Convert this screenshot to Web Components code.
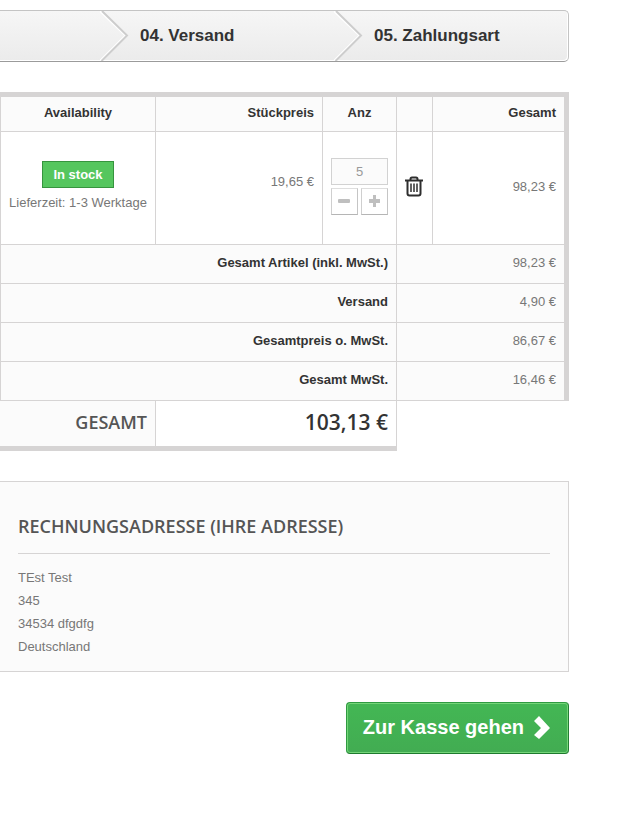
<!DOCTYPE html>
<html lang="de">
<head>
<meta charset="utf-8">
<meta name="viewport" content="width=device-width, initial-scale=1">
<title>Warenkorb</title>
<style>
  body { margin: 0; background: #fff; color: #777; font: 13px/18px "Liberation Sans", Arial, sans-serif; }
</style>
</head>
<body>
<checkout-page>
  <step-bar slot="steps">
    <step-item></step-item>
    <step-item arrow>04. Versand</step-item>
    <step-item arrow>05. Zahlungsart</step-item>
  </step-bar>
  <cart-summary></cart-summary>
  <address-card>
    <span slot="title">Rechnungsadresse (Ihre Adresse)</span>
    <address-line>TEst Test</address-line>
    <address-line>345</address-line>
    <address-line>34534 dfgdfg</address-line>
    <address-line>Deutschland</address-line>
  </address-card>
  <checkout-button>Zur Kasse gehen</checkout-button>
</checkout-page>

<script>
const define = (name, html, setup) => {
  const template = document.createElement('template');
  template.innerHTML = html;
  customElements.define(name, class extends HTMLElement {
    constructor() {
      super();
      this.attachShadow({ mode: 'open' }).append(template.content.cloneNode(true));
      if (setup) setup(this.shadowRoot);
    }
  });
};

define('checkout-page', `
  <style>
    :host { display: block; padding: 10px 73px 60px 0; }
    main { display: flex; flex-direction: column; gap: 30px; }
  </style>
  <main><slot name="steps"></slot><slot></slot></main>
`);

define('step-bar', `
  <style>
    :host {
      display: grid; grid-template-columns: 100px 234px 1fr; height: 50px;
      border: 1px solid #c4c4c4; border-left: 0; border-bottom-color: #9b9b9b;
      border-radius: 0 5px 5px 0; background: linear-gradient(#f6f6f6, #ebebeb);
      box-shadow: inset -1px -1px #fff;
    }
  </style>
  <slot></slot>
`);

define('step-item', `
  <style>
    :host { display: flex; align-items: center; gap: 11px; color: #333; font-size: 17px; font-weight: bold; line-height: 24px; }
    svg { display: none; flex: none; }
    :host([arrow]) svg { display: block; }
  </style>
  <svg width="29" height="50" viewBox="0 0 29 50" fill="none" aria-hidden="true">
    <path d="M0 0 25.5 24.5 0 50" stroke="#fff" stroke-width="2"/>
    <path d="M2 0 27 24.5 1.5 50" stroke="#cdcdcd" stroke-width="2"/>
  </svg>
  <span><slot></slot></span>
`);

define('stock-badge', `
  <style>
    :host { display: inline-block; padding: 4px 10px; border: 1px solid #36943e; background: #55c65e; color: #fff; font-weight: bold; line-height: 17px; }
  </style>
  <slot></slot>
`);

define('quantity-stepper', `
  <style>
    :host { display: grid; grid-template-columns: 27px 27px; gap: 3px; justify-content: center; }
    input, button { box-sizing: border-box; height: 27px; margin: 0; padding: 0; border-radius: 0; }
    input { grid-column: span 2; width: 57px; border: 1px solid #d2d2d2; background: #fbfbfb; color: #999; text-align: center; font: inherit; }
    button { display: grid; place-items: center; border: 1px solid; border-color: #dedede #c5c5c5 #b5b5b5 #cfcfcf; background: #fff; color: #bfbfbf; }
  </style>
  <input type="text" value="5" aria-label="Anzahl">
  <button type="button" aria-label="Weniger"><svg width="13" height="15" viewBox="0 0 13 15"><rect x="0" y="5" width="12" height="4" rx="1" fill="currentColor"/></svg></button>
  <button type="button" aria-label="Mehr"><svg width="13" height="15" viewBox="0 0 13 15"><path d="M5 1h3v4h4v4H8v4H5V9H1V5h4z" fill="currentColor"/></svg></button>
`, root => {
  const input = root.querySelector('input');
  const [less, more] = root.querySelectorAll('button');
  less.addEventListener('click', () => { input.value = Math.max(1, Number(input.value) - 1); });
  more.addEventListener('click', () => { input.value = Number(input.value) + 1; });
});

define('delete-button', `
  <style>
    :host { display: block; }
    button { display: block; margin: 0 auto; padding: 0; border: 0; background: none; color: #2e2e2e; }
    svg { display: block; }
  </style>
  <button type="button" aria-label="Artikel entfernen">
    <svg width="18" height="21" viewBox="0 0 18 21" fill="none" stroke="currentColor" aria-hidden="true">
      <path d="M0 4.5h18" stroke-width="2"/>
      <path d="M5.5 4V3q0-1.5 1.5-1.5h4q1.500 0 1.500 1.500v1" stroke-width="2"/>
      <path d="M2.500 5v12.500q0 2 2 2h9q2 0 2-2V5" stroke-width="2"/>
      <path d="M6 7.500V16M9 7.500V16M12 7.500V16" stroke-width="1.500"/>
    </svg>
  </button>
`);

define('cart-summary', `
  <style>
    :host { display: block; }
    table { width: 100%; table-layout: fixed; border-collapse: separate; border-spacing: 0; border-top: 5px solid #d6d4d4; }
    .c1 { width: 156px; } .c2 { width: 167px; } .c3 { width: 74px; } .c4 { width: 36px; }
    th, td { box-sizing: border-box; padding: 8px; border: 0 solid #d6d4d4; border-width: 0 1px 1px 0; text-align: right; vertical-align: middle; }
    th { color: #333; background: #fbfbfb; }
    thead th { height: 35px; padding: 7px 8px 9px; }
    tr > :first-child { border-left-width: 1px; }
    tr > :last-child { border-right-width: 5px; }
    tbody td { height: 113px; padding: 8px 8px 11px; }
    .center { text-align: center; }
    .availability { display: flex; flex-direction: column; align-items: center; gap: 6px; white-space: nowrap; }
    tbody .price { padding-bottom: 20px; }
    tbody .tight { padding: 8px 4px 12px; }
    tbody .delete { padding: 8px 5px 11px 4px; }
    tfoot th, tfoot td { height: 39px; padding: 8px 8px 11px; background: #fbfbfb; }
    tfoot .total > * { height: 50px; padding: 8px 8px 12px; border-bottom-width: 5px; font-family: "Open Sans", sans-serif; }
    tfoot .total th { border-left: 0; color: #555; font-size: 18px; font-weight: 600; line-height: 24px; }
    tfoot .total td { color: #333; background: #fff; font-size: 21px; font-weight: 600; line-height: 24px; }
    tfoot .total .blank { border: 0; }
  </style>
  <table>
    <colgroup><col class="c1"><col class="c2"><col class="c3"><col class="c4"><col></colgroup>
    <thead><tr>
      <th class="center" scope="col">Availability</th><th scope="col">Stückpreis</th>
      <th class="center" scope="col">Anz</th><th></th><th scope="col">Gesamt</th>
    </tr></thead>
    <tbody><tr>
      <td><div class="availability"><stock-badge>In stock</stock-badge><span>Lieferzeit: 1-3 Werktage</span></div></td>
      <td class="price">19,65 €</td>
      <td class="tight"><quantity-stepper></quantity-stepper></td>
      <td class="delete"><delete-button></delete-button></td>
      <td>98,23 €</td>
    </tr></tbody>
    <tfoot>
      <tr><th colspan="3" scope="row">Gesamt Artikel (inkl. MwSt.)</th><td colspan="2">98,23 €</td></tr>
      <tr><th colspan="3" scope="row">Versand</th><td colspan="2">4,90 €</td></tr>
      <tr><th colspan="3" scope="row">Gesamtpreis o. MwSt.</th><td colspan="2">86,67 €</td></tr>
      <tr><th colspan="3" scope="row">Gesamt MwSt.</th><td colspan="2">16,46 €</td></tr>
      <tr class="total"><th scope="row">GESAMT</th><td colspan="2">103,13 €</td><td class="blank" colspan="2"></td></tr>
    </tfoot>
  </table>
`);

define('address-line', `
  <style>:host { display: block; line-height: 23px; }</style>
  <slot></slot>
`);

define('address-card', `
  <style>
    :host { display: block; padding: 32px 18px 13px; border: 1px solid #d6d4d4; border-left: 0; background: #fbfbfb; }
    h3 { margin: 0 0 12px; padding-bottom: 15px; border-bottom: 1px solid #d6d4d4; color: #555; font: 600 18px/24px "Open Sans", sans-serif; text-transform: uppercase; }
  </style>
  <h3><slot name="title"></slot></h3>
  <slot></slot>
`);

define('checkout-button', `
  <style>
    :host { display: flex; justify-content: flex-end; }
    button {
      display: flex; align-items: center; gap: 10px; height: 52px; padding: 0 17px 2px 16px;
      border: 1px solid; border-color: #2f9a41 #247f34 #1e7a2e #2f9a41; border-radius: 4px;
      background: linear-gradient(#43b754, #42ac52); box-shadow: inset 0 0 0 1px #74d578;
      color: #fff; font: bold 20px/24px "Liberation Sans", Arial, sans-serif;
    }
  </style>
  <button type="button">
    <slot></slot>
    <svg width="17" height="24" viewBox="0 0 17 24" aria-hidden="true"><path d="M0 6 5 1 16 13 5 24 0 20 7 13z" fill="#fff"/></svg>
  </button>
`);
</script>
</body>
</html>
